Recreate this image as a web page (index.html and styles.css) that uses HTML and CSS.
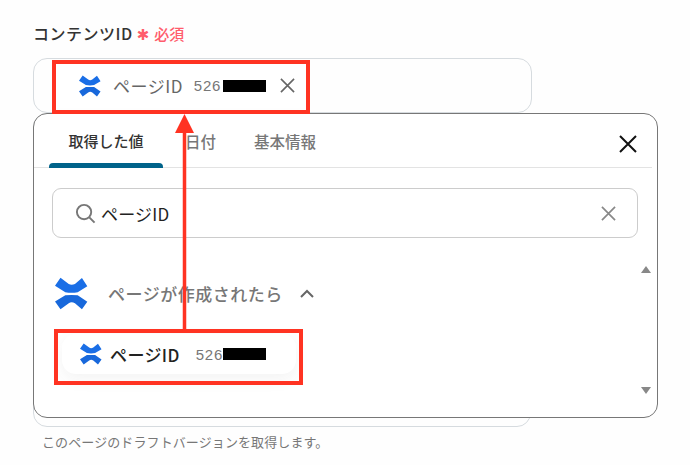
FILE: index.html
```html
<!DOCTYPE html>
<html lang="ja">
<head>
    <meta charset="UTF-8">
    <meta name="viewport" content="width=device-width, initial-scale=1.0">
    <title>コンテンツID</title>
    <link rel="stylesheet" href="styles.css">
</head>
<body>
    <svg width="0" height="0" class="defs">
        <symbol id="logo" viewBox="0 0 24 24">
            <path d="M4 .5 L10 5 Q12 6.2 14.5 5 L19.6 .8 L23.5 6.8 L16.5 11 Q12 11.8 7.5 11 L0 6.4 Z" fill="#1a6ee6"/>
            <path d="M0 17.8 L7.5 13.2 Q12 13 16.5 13.2 L23.5 18 L19.6 23.5 L14.5 19 Q12 17.8 10 19 L4 23.5 Z" fill="#1868db"/>
        </symbol>
    </svg>

    <div class="form">
        <div class="label-row">
            <span class="label">コンテンツID</span>
            <span class="star">✱</span>
            <span class="required">必須</span>
        </div>

        <div class="field">
            <div class="chip">
                <svg class="chip-logo"><use href="#logo"/></svg>
                <span class="chip-name">ページID</span>
                <span class="chip-value">526</span>
                <span class="masked"></span>
                <svg class="chip-close" viewBox="0 0 16 16"><path d="M1 1 L15 15 M15 1 L1 15"/></svg>
            </div>
        </div>

        <div class="field-behind"></div>
        <p class="help">このページのドラフトバージョンを取得します。</p>

        <div class="popup">
            <div class="tabs">
                <div class="tab active">取得した値</div>
                <div class="tab">日付</div>
                <div class="tab">基本情報</div>
                <svg class="popup-close" viewBox="0 0 18 18"><path d="M1 1 L17 17 M17 1 L1 17"/></svg>
            </div>

            <div class="search">
                <svg class="search-icon" viewBox="0 0 22 22"><circle cx="9.5" cy="9.5" r="7.5"/><path d="M15 15 L20.5 20.5"/></svg>
                <span class="search-text">ページID</span>
                <svg class="search-clear" viewBox="0 0 16 16"><path d="M1 1 L15 15 M15 1 L1 15"/></svg>
            </div>

            <div class="group">
                <svg class="group-logo"><use href="#logo"/></svg>
                <span class="group-name">ページが作成されたら</span>
                <svg class="chevron" viewBox="0 0 14 9"><path d="M1 8 L7 2 L13 8"/></svg>
            </div>

            <div class="item">
                <svg class="item-logo"><use href="#logo"/></svg>
                <span class="item-name">ページID</span>
                <span class="item-value">526</span>
                <span class="masked"></span>
            </div>

            <div class="scroll">
                <span class="tri-up"></span>
                <span class="tri-down"></span>
            </div>
        </div>

        <svg class="marks" width="690" height="465" viewBox="0 0 690 465">
            <rect x="54" y="62" width="254" height="50"/>
            <rect x="56" y="331" width="245" height="52"/>
            <path class="shaft" d="M184.5 331 L184.5 128"/>
            <path class="head" d="M184.5 114 L194 133 L175 133 Z"/>
        </svg>
    </div>
</body>
</html>
```

FILE: styles.css
```css
body {
    margin: 0;
    background-color: #fefefe;
    font-family: "Noto Sans CJK JP", "Liberation Sans", sans-serif;
}

.defs {
    position: absolute;
}

.form {
    position: relative;
    width: 690px;
    height: 465px;
    padding: 21px 0 0 33px;
    box-sizing: border-box;
    overflow: hidden;
}

.label-row {
    display: flex;
    align-items: center;
    height: 24px;
}

.label {
    font-size: 16px;
    font-weight: 500;
    color: #333;
    letter-spacing: 0.5px;
}

.star {
    margin-left: 4px;
    font-family: "DejaVu Sans", sans-serif;
    font-size: 15px;
    line-height: 24px;
    color: #ff5c6c;
    padding-top: 3px;
}

.required {
    margin-left: 5px;
    font-size: 15px;
    font-weight: 500;
    color: #ff5c6c;
}

.field {
    width: 499px;
    height: 55px;
    margin-top: 13px;
    border: 1px solid #d6dbdf;
    border-radius: 14px;
    box-sizing: border-box;
    padding-left: 21px;
    display: flex;
    align-items: center;
}

.chip {
    display: flex;
    align-items: center;
    width: 252px;
    height: 44px;
    padding-left: 24px;
    box-sizing: border-box;
    background: #fff;
}

.chip-logo {
    width: 22px;
    height: 22px;
}

.chip-name {
    margin-left: 12px;
    font-size: 17px;
    letter-spacing: 0.5px;
    color: #666;
}

.chip-value {
    margin-left: 11px;
    width: 29px;
    font-size: 15px;
    color: #777;
    font-family: "Liberation Sans", sans-serif;
    letter-spacing: 0.7px;
}

.masked {
    display: block;
    width: 43px;
    height: 12px;
    background: #000;
}

.chip-close {
    width: 15px;
    height: 15px;
    margin-left: 14px;
    fill: none;
    stroke: #666;
    stroke-width: 1.7;
}

.field-behind {
    width: 498px;
    height: 314px;
    border: 1px solid #d6dbdf;
    border-radius: 14px;
    box-sizing: border-box;
}

.help {
    margin: 6px 0 0 9px;
    font-size: 13px;
    letter-spacing: 0.1px;
    line-height: 18px;
    color: #777;
}

.popup {
    position: absolute;
    left: 33px;
    top: 113px;
    width: 625px;
    height: 305px;
    background: #fff;
    border: 1px solid #777;
    border-radius: 14px;
    box-sizing: border-box;
}

.tabs {
    display: flex;
    height: 54px;
    margin: 0 5px 0 0;
    border-bottom: 1px solid #e3e3e3;
    position: relative;
    box-sizing: border-box;
}

.tab {
    padding-top: 16px;
    font-size: 15.5px;
    font-weight: 500;
    line-height: 22px;
    color: #777;
    margin-left: 38px;
}

.tab.active {
    position: relative;
    width: 114px;
    margin-left: 15px;
    font-size: 15px;
    color: #333;
    text-align: center;
    box-sizing: border-box;
}

.tab.active::after {
    content: "";
    position: absolute;
    left: 0;
    right: 0;
    bottom: -1px;
    height: 5px;
    background: #00638a;
    border-radius: 4px 4px 0 0;
}

.tab.active + .tab {
    margin-left: 22px;
}

.popup-close {
    position: absolute;
    left: 585px;
    top: 21px;
    width: 18px;
    height: 18px;
    fill: none;
    stroke: #111;
    stroke-width: 2;
}

.search {
    display: flex;
    align-items: center;
    height: 50px;
    margin: 20px 19px 0 18px;
    padding-left: 22px;
    border: 1px solid #ccc;
    border-radius: 9px;
    box-sizing: border-box;
}

.search-icon {
    width: 21px;
    height: 21px;
    fill: none;
    stroke: #777;
    stroke-width: 2;
}

.search-text {
    margin-left: 5px;
    font-size: 17px;
    letter-spacing: 0.2px;
    color: #222;
}

.search-clear {
    width: 15px;
    height: 15px;
    margin-left: auto;
    margin-right: 21px;
    fill: none;
    stroke: #888;
    stroke-width: 1.8;
}

.group {
    display: flex;
    align-items: center;
    height: 36px;
    margin: 37px 0 0 21px;
}

.group-logo {
    width: 33px;
    height: 33px;
}

.group-name {
    margin-left: 20px;
    font-size: 17px;
    letter-spacing: 0.5px;
    font-weight: 500;
    color: #777;
}

.chevron {
    width: 14px;
    height: 9px;
    margin-left: 17px;
    fill: none;
    stroke: #666;
    stroke-width: 2;
}

.item {
    display: flex;
    align-items: center;
    width: 234px;
    height: 40px;
    margin: 23px 0 0 28px;
    padding-left: 18px;
    box-sizing: border-box;
    background: #fff;
    border-radius: 14px;
    box-shadow: 0 6px 16px rgba(60, 60, 70, 0.06);
}

.item-logo {
    width: 22px;
    height: 22px;
}

.item-name {
    margin-left: 8px;
    font-size: 17px;
    letter-spacing: 0.4px;
    font-weight: 500;
    color: #222;
}

.item-value {
    margin-left: 16px;
    width: 27px;
    font-size: 15px;
    color: #777;
    font-family: "Liberation Sans", sans-serif;
    letter-spacing: 0.7px;
}

.scroll {
    position: absolute;
    right: 6px;
    top: 152px;
    height: 128px;
    display: flex;
    flex-direction: column;
    justify-content: space-between;
}

.tri-up, .tri-down {
    display: block;
    width: 0;
    height: 0;
    border-left: 5px solid transparent;
    border-right: 5px solid transparent;
}

.tri-up {
    border-bottom: 7px solid #888;
}

.tri-down {
    border-top: 7px solid #888;
}

.marks {
    position: absolute;
    left: 0;
    top: 0;
    pointer-events: none;
}

.marks rect {
    fill: none;
    stroke: #ff3322;
    stroke-width: 4;
}

.marks .shaft {
    fill: none;
    stroke: #ff3322;
    stroke-width: 3.5;
}

.marks .head {
    fill: #ff3322;
}
```
